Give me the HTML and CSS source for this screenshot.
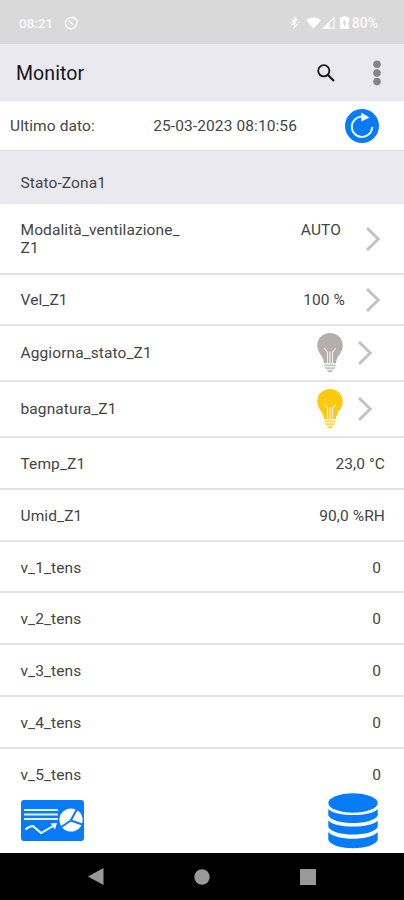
FILE: index.html
```html
<!DOCTYPE html>
<html lang="it">
<head>
    <meta charset="UTF-8">
    <meta name="viewport" content="width=device-width, initial-scale=1.0">
    <title>Monitor</title>
    <link rel="stylesheet" href="styles.css">
</head>
<body>

    <div class="status-bar">
        <span class="clock">08:21</span>
        <svg class="alarm" width="14" height="14" viewBox="0 0 14 14" fill="none" stroke="#fafafa" stroke-width="1.4">
            <path d="M10.8 3A5.6 5.6 0 1 0 12.6 7"/>
            <path d="M4.5 4.5l4.5 4M7.5 1.2l3 .2 2.4 3.2.2 2.4"/>
        </svg>
        <div class="status-icons">
            <svg class="bluetooth" width="11" height="13" viewBox="0 0 11 13" fill="none" stroke="#fff" stroke-width="1.1">
                <path d="M2.4 3.6l5.5 5.2L5.3 11.6V1.4l2.6 2.6-5.5 5.4M.6 6.5h1.3M9.2 6.5h1.3"/>
            </svg>
            <svg class="wifi" width="15" height="12" viewBox="0 0 15 12" fill="#fff">
                <path d="M.2 3.2C4.4-.4 10.6-.4 14.8 3.2L7.5 11.8z"/>
            </svg>
            <svg class="signal" width="13" height="12" viewBox="0 0 13 12">
                <path d="M1.4 11.2L12 .9v10.3z" fill="none" stroke="#fff" stroke-width="1.1"/>
                <path d="M.6 11.6l7-6.8v6.8z" fill="#fff"/>
            </svg>
            <svg class="battery" width="9" height="13" viewBox="0 0 9 13">
                <path d="M3 0h3v1.3h2.2q.8 0 .8.8v10q0 .9-.8.9H.8q-.8 0-.8-.9v-10q0-.8.8-.8H3z" fill="#fff"/>
                <path d="M5 3.2L2.3 7.6h1.8v3.3l2.6-4.5H5z" fill="#d9d9d9"/>
            </svg>
            <span class="percent">80%</span>
        </div>
    </div>

    <div class="toolbar">
        <h1>Monitor</h1>
        <svg class="search" width="18" height="18" viewBox="0 0 18 18" fill="none" stroke="#151518" stroke-width="1.8">
            <circle cx="6.8" cy="6.8" r="5.6"/>
            <path d="M10.8 10.8l6.200 6.200" stroke-width="2.1"/>
        </svg>
        <svg class="menu" width="8" height="26" viewBox="0 0 8 26" fill="#858588">
            <circle cx="4" cy="4.2" r="3.8"/>
            <circle cx="4" cy="13" r="3.8"/>
            <circle cx="4" cy="21.6" r="3.8"/>
        </svg>
    </div>

    <div class="last-data">
        <span>Ultimo dato:</span>
        <span class="date">25-03-2023 08:10:56</span>
        <svg class="refresh" width="34" height="34" viewBox="0 0 34 34">
            <circle cx="17" cy="17" r="17" fill="#087bf8"/>
            <path d="M18 7.600A10.200 10.200 0 1 0 27.200 18" fill="none" stroke="#eef6ff" stroke-width="2"/>
            <path d="M16.3 3.4l8.2 5-8.2 4.2z" fill="#fff"/>
        </svg>
    </div>

    <div class="section">Stato-Zona1</div>

    <div class="list">
        <div class="row tall">
            <span class="name">Modalità_ventilazione_<br>Z1</span>
            <span class="value">AUTO</span>
            <svg class="arrow" width="16" height="26" viewBox="0 0 16 26"><path d="M2 2l11.2 11L2 24"/></svg>
        </div>
        <div class="row speed">
            <span class="name">Vel_Z1</span>
            <span class="value">100 %</span>
            <svg class="arrow" width="16" height="26" viewBox="0 0 16 26"><path d="M2 2l11.2 11L2 24"/></svg>
        </div>
        <div class="row light">
            <span class="name">Aggiorna_stato_Z1</span>
            <svg class="bulb off" width="26" height="40" viewBox="0 0 26 40">
                <path d="M13 0C5.800 0 .3 5.400 .3 12.300c0 6.500 3.400 8.400 5.300 12.400 1 2 1.100 3.800 1.500 5.600h11.800c.4-1.800.5-3.600 1.500-5.600 2-4 5.300-5.900 5.300-12.400C25.700 5.400 20.200 0 13 0z"/>
                <path class="wire" d="M7.400 15l3.100 4.500v10.500M18.600 15l-3.100 4.500v10.500M13 18.500v11.500"/>
                <path class="base" d="M7.400 31.600h11.200v1.600H7.400zM7.700 34.200h10.600l-1.100 2H8.800zM10 37h6l-1.200 2.200h-3.600z"/>
            </svg>
            <svg class="arrow" width="16" height="26" viewBox="0 0 16 26"><path d="M2 2l11.2 11L2 24"/></svg>
        </div>
        <div class="row light">
            <span class="name">bagnatura_Z1</span>
            <svg class="bulb on" width="26" height="40" viewBox="0 0 26 40">
                <path d="M13 0C5.800 0 .3 5.400 .3 12.300c0 6.500 3.400 8.400 5.300 12.400 1 2 1.100 3.800 1.500 5.600h11.800c.4-1.800.5-3.600 1.500-5.600 2-4 5.300-5.900 5.300-12.400C25.700 5.400 20.200 0 13 0z"/>
                <path class="wire" d="M7.400 15l3.100 4.500v10.500M18.600 15l-3.100 4.500v10.500M13 18.500v11.500"/>
                <path class="base" d="M7.400 31.600h11.200v1.600H7.400zM7.700 34.200h10.600l-1.100 2H8.800zM10 37h6l-1.200 2.200h-3.600z"/>
            </svg>
            <svg class="arrow" width="16" height="26" viewBox="0 0 16 26"><path d="M2 2l11.2 11L2 24"/></svg>
        </div>
        <div class="row">
            <span class="name">Temp_Z1</span>
            <span class="value">23,0 °C</span>
        </div>
        <div class="row">
            <span class="name">Umid_Z1</span>
            <span class="value">90,0 %RH</span>
        </div>
        <div class="row number">
            <span class="name">v_1_tens</span>
            <span class="value">0</span>
        </div>
        <div class="row number">
            <span class="name">v_2_tens</span>
            <span class="value">0</span>
        </div>
        <div class="row number">
            <span class="name">v_3_tens</span>
            <span class="value">0</span>
        </div>
        <div class="row number">
            <span class="name">v_4_tens</span>
            <span class="value">0</span>
        </div>
        <div class="row number last">
            <span class="name">v_5_tens</span>
            <span class="value">0</span>
        </div>
    </div>

    <div class="actions">
        <svg class="chart" width="63" height="41" viewBox="0 0 63 41">
            <rect width="63" height="41" rx="3" fill="#087bf8"/>
            <path d="M3 10h34M3 14.500h34M3 19h34" stroke="#e4f0ff" stroke-width="2"/>
            <path d="M4.500 29.500q4-3.500 7.500-3.500l8 7L33 25.500" fill="none" stroke="#fff" stroke-width="2"/>
            <path d="M29.500 23.500l6.500-.5-2 6.500z" fill="#fff"/>
            <circle cx="50" cy="20" r="11.600" fill="#fff"/>
            <path d="M49.800 20.500L56.500 8M49.800 20.500L39 28M49.800 20.500L63 25" stroke="#087bf8" stroke-width="2"/>
        </svg>
        <svg class="database" width="50" height="56" viewBox="0 0 50 56" fill="#087bf8">
            <ellipse cx="25" cy="10" rx="24.700" ry="9.700"/>
            <path d="M.3 16c7 8 42.400 8 49.400 0v6.500c-5 10-44.400 10-49.400 0z"/>
            <path d="M.3 27.500c7 8 42.400 8 49.400 0V34c-5 10-44.400 10-49.400 0z"/>
            <path d="M.3 39c7 9 42.400 9 49.400 0v8c-5 11-44.400 11-49.400 0z"/>
        </svg>
    </div>

    <div class="nav-bar">
        <svg width="16" height="17" viewBox="0 0 16 17" fill="#999"><path d="M0 8.500L15.500 0v17z"/></svg>
        <svg width="16" height="16" viewBox="0 0 16 16" fill="#999"><circle cx="8" cy="8" r="7.700"/></svg>
        <svg width="16" height="16" viewBox="0 0 16 16" fill="#999"><rect width="16" height="16"/></svg>
    </div>

</body>
</html>
```
FILE: styles.css
```css
* {
    box-sizing: border-box;
}

body {
    display: flex;
    flex-direction: column;
    height: 900px;
    margin: 0;
    overflow: hidden;
    font-family: Roboto, sans-serif;
    font-size: 15.5px;
    letter-spacing: 0.1px;
    color: #444;
    background: white;
}

svg {
    display: block;
    flex: none;
}

.status-bar {
    display: flex;
    align-items: center;
    flex: none;
    height: 44px;
    padding: 1px 26px 0 19px;
    background: #d9d9d9;
    color: #fafafa;
    font-size: 13.5px;
    font-weight: 500;
    letter-spacing: 0;
}

.clock {
    width: 45px;
}

.status-icons {
    display: flex;
    align-items: center;
    margin-left: auto;
}

.wifi {
    margin-left: 6px;
}

.signal {
    margin-left: 1px;
}

.battery {
    margin-left: 5px;
}

.percent {
    margin-left: 3px;
    font-size: 14px;
}

.toolbar {
    display: flex;
    align-items: center;
    flex: none;
    height: 57px;
    padding: 0 23px 0 16px;
    background: #eae9f0;
}

.toolbar h1 {
    flex: 1;
    margin: 1px 0 0;
    font-size: 19.5px;
    font-weight: 400;
    color: #151518;
}

.menu {
    margin-left: 38px;
}

.last-data {
    display: flex;
    align-items: center;
    flex: none;
    height: 49px;
    padding: 0 25px 0 10px;
}

.date {
    margin-left: auto;
}

.refresh {
    margin-left: 48px;
}

.section {
    flex: none;
    height: 54px;
    padding: 22px 20.5px 0;
    line-height: 20px;
    background: #eae9f0;
    border-top: 1px solid #dcdce0;
}

.list {
    flex: none;
}

.row {
    display: flex;
    align-items: center;
    height: 51.8px;
    padding: 2px 19px 0 20.5px;
    border-bottom: 2px solid #e2e2e2;
    line-height: 18px;
}

.name {
    flex: 1;
}

.tall {
    height: 71px;
    padding-top: 0;
    padding-right: 23px;
}

.tall .value {
    align-self: flex-start;
    margin-top: 17px;
}

.tall .arrow {
    margin-left: 24px;
}

.speed {
    height: 50.5px;
    padding-right: 23px;
}

.speed .arrow {
    margin-left: 20px;
}

.light {
    height: 56.3px;
    padding-top: 0;
    padding-right: 31px;
}

.light .arrow {
    margin-left: 14px;
}

.number {
    padding-right: 23px;
}

.last {
    height: 44px;
    padding-top: 9px;
    border-bottom: 0;
}

.arrow {
    fill: none;
    stroke: #c3c3c5;
    stroke-width: 3;
}

.bulb.off {
    fill: #b3afad;
}

.bulb.on {
    fill: #fdc90c;
}

.bulb .wire {
    fill: none;
    stroke: #f3ece4;
    stroke-width: 1.2;
}

.bulb .base {
    opacity: 0.75;
}

.actions {
    display: flex;
    justify-content: space-between;
    align-items: center;
    flex: 1;
    padding: 0 26px 4px 21px;
}

.nav-bar {
    display: flex;
    justify-content: space-between;
    align-items: center;
    flex: none;
    height: 47px;
    padding: 0 88px;
    background: black;
}
```
